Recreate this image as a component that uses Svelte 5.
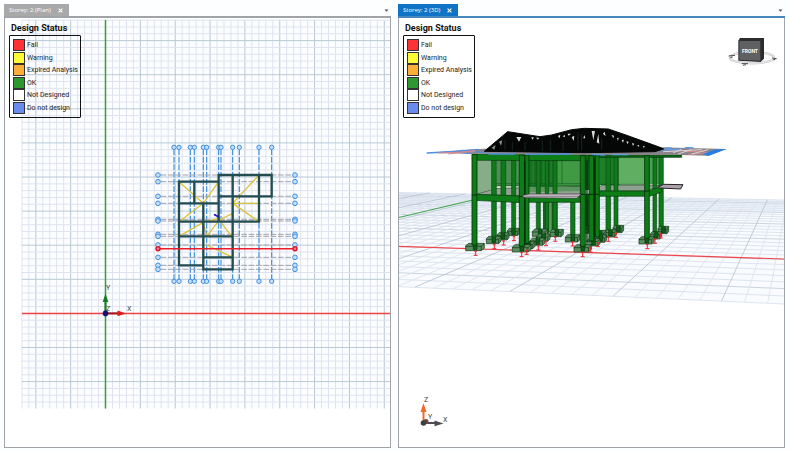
<script lang="ts">
  type Point = [number, number];

  const statuses = [
    { label: "Fail", color: "#fb3236" },
    { label: "Warning", color: "#fdfb35" },
    { label: "Expired Analysis", color: "#fbae3a" },
    { label: "OK", color: "#2f972f" },
    { label: "Not Designed", color: "#ffffff" },
    { label: "Do not design", color: "#6a8bee" },
  ];

  const panels = [
    { id: "plan", title: "Storey: 2 (Plan)" },
    { id: "model", title: "Storey: 2 (3D)" },
  ];
  let active = $state("model");

  // plan view
  const planCols = Array.from({ length: 53 }, (_, i) => ({
    x: 105.5 + (i - 12) * 6.97,
    major: (i - 12) % 5 === 0,
  }));
  const planRows = Array.from({ length: 57 }, (_, i) => ({
    y: 313.4 + (i - 43) * 6.82,
    major: (i - 43) % 5 === 0,
  }));
  const gridX = [102, 117, 151, 163, 190, 200, 236, 243, 278, 298, 357, 395];
  const gridY = [120, 140, 184, 205, 253, 258, 298, 304, 330, 367, 391, 403];

  const beams =
    "M117 140H236M117 140V391M163 140V205M117 205H236M236 120V260M236 120H395V184H236" +
    "M278 120V403M357 120V260M117 260H357M190 205V403M117 304H278M190 367H278M117 391H190M190 403H278";
  const spans =
    "M117 140L190 205L236 140M190 205L117 260M117 304L190 262L200 304M357 120L278 205L357 260" +
    "M278 205H352M200 304L238 255L275 304M200 330L278 367M238 255L278 235M190 262L236 250";

  // ground plane of the 3D view
  const vanish: Point = [1237, -172];
  const groundRows = Array.from({ length: 30 }, (_, i) => {
    const t = i / 29;
    return {
      left: 1 / (0.002033 + 0.00273 * t) - 172,
      right: 1 / (0.001838 + 0.00247 * t) - 172,
      major: i % 5 === 2,
    };
  });
  const majors = [-1640, -1470, -1290, -1100, -895, -675, -440, -190, 75, 360, 670, 995, 1340];
  const groundCols = majors.slice(0, -1).flatMap((x, i) =>
    [0, 1, 2, 3, 4].map((k) => {
      const bx = x + ((majors[i + 1] - x) * k) / 5;
      const by = 319 + (bx - 25) * 0.045;
      const slope = (vanish[0] - bx) / (vanish[1] - by);
      const ty = 38 + ((bx + (50 - by) * slope) - 25) * 0.019;
      return { x1: bx, y1: by, x2: bx + (ty - by) * slope, y2: ty, major: k === 0 };
    }),
  );

  // [x, width, top, bottom]
  const backColumns = [
    [200, 14, 136, 368], [228, 14, 136, 358], [260, 12, 136, 345],
    [334, 12, 136, 370], [361, 10, 136, 355], [384, 12, 136, 345],
    [437, 13, 250, 362], [505, 6, 124, 350],
    [543, 14, 124, 348], [567, 12, 124, 336], [684, 11, 124, 352], [702, 13, 124, 338],
  ];
  const frontColumns = [
    [141, 15, 118, 390], [283, 16, 120, 394], [300, 12, 120, 385],
    [466, 15, 122, 394], [492, 14, 122, 378], [511, 12, 122, 366], [659, 14, 122, 370],
  ];
  // [centre x, centre y, width]
  const footings = [
    [265, 351, 36], [395, 354, 40], [345, 353, 46], [495, 344, 44], [580, 342, 32], [715, 345, 32],
    [234, 364, 36], [355, 368, 40], [556, 355, 36], [693, 361, 34], [525, 357, 36],
    [206, 375, 44], [338, 380, 44], [443, 370, 44], [527, 371, 36], [505, 382, 40], [665, 376, 46],
    [310, 390, 40], [150, 396, 56], [290, 400, 56], [473, 400, 52],
  ];
  const supports = [
    [152, 406], [208, 386], [236, 375], [267, 362], [290, 410], [305, 403], [340, 390], [363, 377],
    [391, 364], [443, 378], [473, 410], [497, 396], [519, 380], [550, 364], [573, 352],
    [667, 386], [690, 370], [707, 354],
  ];
  const trussGaps =
    "M274 66H289L282 80ZM319 67H327L322 74ZM333 68H342L339 74Z" +
    "M399 63L406 59L404 70ZM413 64L420 60L420 66ZM428 56H438L431 62Z" +
    "M440 66L448 63L446 78ZM500 48H510L505 76ZM515 82L520 56L523 86ZM534 56L539 50L542 64Z" +
    "M478 60L481 70H475ZM560 60L567 62L565 70ZM576 69L581 68L579 78Z" +
    "M590 75L597 74L594 83ZM604 79L611 80L608 88ZM621 84L628 86L624 93ZM637 90L643 90L640 96Z" +
    "M654 93L660 94L656 99Z";
</script>

<main class="workspace">
  {#each panels as panel (panel.id)}
    <section class="panel" class:active={active === panel.id}>
      <header class="tab-bar">
        <div class="tab">
          <button class="tab-title" onclick={() => (active = panel.id)}>{panel.title}</button>
          <button class="tab-close" aria-label="Close {panel.title}">
            <svg viewBox="0 0 5 5"><path d="M.6 .6L4.4 4.4M4.4 .6L.6 4.4" stroke="#fff" stroke-width="1.1" /></svg>
          </button>
        </div>
        <button class="tab-menu" aria-label="View list">
          <svg viewBox="0 0 5 5"><path d="M.5 1.5H4.5L2.5 3.8Z" fill="#46525e" /></svg>
        </button>
      </header>

      <div class="view">
        {#if panel.id === "plan"}
          <svg class="scene" viewBox="5 18 385 429" role="img" aria-label="Storey plan">
            <g fill="none">
              <rect x="22" y="20" width="368" height="388.5" fill="#fcfdff" />
              {#each planCols as c}
                <line x1={c.x} x2={c.x} y1="20" y2="408.5" stroke={c.major ? "#b9c6d6" : "#dfe3f0"} stroke-width="1" />
              {/each}
              {#each planRows as r}
                <line x1="22" x2="390" y1={r.y} y2={r.y} stroke={r.major ? "#b9cad6" : "#dfe3f0"} stroke-width="1" />
              {/each}
              <path d="M105.5 20V408.5" stroke="#2ba336" stroke-width="1.5" />
              <path d="M22 313.4H390" stroke="#f04444" stroke-width="1.5" />
            </g>

            <g transform="translate(140 135) scale(.3333)" fill="none">
              {#each gridX as x}
                <line x1={x} x2={x} y1="44" y2="432" stroke="#3b8ee0" stroke-width="3.5" stroke-dasharray="17 5" />
                <circle cx={x} cy="37" r="6.5" fill="#c6e0f9" stroke="#3b8ee0" stroke-width="3" />
                <circle cx={x} cy="439" r="6.5" fill="#c6e0f9" stroke="#3b8ee0" stroke-width="3" />
              {/each}
              {#each gridY as y}
                <line x1="62" x2="457" y1={y} y2={y} stroke="#a2a2a8" stroke-width="3" stroke-dasharray="17 5" />
                <circle cx="54" cy={y} r="7" fill="#c6e0f9" stroke="#3b8ee0" stroke-width="3" />
                <circle cx="465" cy={y} r="7" fill="#c6e0f9" stroke="#3b8ee0" stroke-width="3" />
              {/each}
              <path d={spans} stroke="#dcc23a" stroke-width="4" />
              <path d={beams} stroke="#234c50" stroke-width="7" stroke-linecap="square" />
              <path d="M60 341H459" stroke="#ee1c2a" stroke-width="4.5" />
              <circle cx="54" cy="341" r="6" fill="#f08a98" stroke="#e0182a" stroke-width="4.5" />
              <circle cx="465" cy="341" r="6" fill="#f08a98" stroke="#e0182a" stroke-width="4.5" />
              <path d="M224 239L227 241M231 243L233 245" stroke="#1c16c8" stroke-width="5.5" stroke-linecap="round" />
            </g>

            <path d="M105.5 313V300" stroke="#157a22" stroke-width="2" />
            <path d="M105.5 293.5L108.3 302H102.7Z" fill="#157a22" />
            <path d="M106 313.4H119" stroke="#a81616" stroke-width="2" />
            <path d="M126 313.4L117.5 310.6V316.2Z" fill="#d81e1e" />
            <text class="axis" x="106" y="311">Z</text>
            <circle cx="105.5" cy="313.4" r="2.8" fill="#12127a" />
            <text class="axis" x="106" y="290">Y</text>
            <text class="axis" x="127" y="311">X</text>
          </svg>
        {:else}
          <svg class="scene" viewBox="399 18 385 429" role="img" aria-label="3D model">
            <g transform="translate(390 180) scale(.3333)" fill="none">
              <path d="M25 38L1184 60V373L25 320Z" fill="#f9fbfe" />
              <path d="M25 38L1184 60V95L25 85Z" fill="#f0f5fb" />
              {#each groundRows as r}
                <line x1="25" x2="1184" y1={r.left} y2={r.right} stroke={r.major ? "#bfcddb" : "#d7e0ed"} stroke-width="2.5" />
              {/each}
              {#each groundCols as c}
                <line x1={c.x1} x2={c.x2} y1={c.y1} y2={c.y2} stroke={c.major ? "#b4c3d2" : "#dbe2ed"} stroke-width="2.5" />
              {/each}
              <path d="M25 113L248 60" stroke="#3fa549" stroke-width="3.5" />
              <path d="M25 199L1184 237" stroke="#f0444a" stroke-width="3.5" />
            </g>

            <g transform="translate(425 115) scale(.3333)" stroke-linejoin="round">
              <!-- walls -->
              <path d="M155 136H201V222L155 236Z" fill="#86ac88" />
              <path d="M214 134H284V214H214Z" fill="#4c8f52" />
              <path d="M308 134H398V222H308Z" fill="#207a29" />
              <path d="M395 134H466V215H395Z" fill="#3f9a43" />
              <path d="M478 124H520V225H478Z" fill="#1c6c25" />
              <path d="M524 124H583V210H524Z" fill="#1f8029" />
              <path d="M580 124H660V208H580Z" fill="#5fae62" />
              <path d="M672 124H706V206H672Z" fill="#4ba152" />
              <path d="M354 255H398V350H354ZM478 250H520V350H478Z" fill="#19611f" />
              <path d="M372 262H380V350H372ZM508 262H514V340H508Z" fill="#5c9c61" />
              <g fill="none" stroke="#0f4d17" stroke-width="1.5">
                <path d="M214 206H466M214 212H466M318 136V212M330 136V212M411 136V206M524 208H660M580 124V208M672 205H706M350 136V212M374 136V212" />
              </g>

              <!-- floor -->
              <path d="M152 238L214 220L470 214L466 238L300 243Z" fill="#92a393" stroke="#16431b" stroke-width="2" />
              <path d="M512 228L530 210H705L668 228Z" fill="#8fa191" stroke="#16431b" stroke-width="2" />
              <path d="M310 216H466V228L310 232Z" fill="#5d9460" />

              {#each backColumns as [x, w, top, bottom]}
                <rect {x} y={top} width={w} height={bottom - top} fill="#0f7a1a" stroke="#084a10" stroke-width="2" />
              {/each}

              {#each footings as [cx, cy, w]}
                <g stroke="#0a3410" stroke-width="2">
                  <path d="M{cx - w / 2} {cy - 4}L{cx - w / 3} {cy - 11}H{cx + w / 2}V{cy + 4}L{cx + w / 3} {cy + 11}H{cx - w / 2}Z" fill="#5b8d60" />
                  <path d="M{cx - w / 2} {cy - 2}H{cx + w / 3}L{cx + w / 2} {cy - 10}M{cx + w / 3} {cy - 2}V{cy + 11}" fill="none" />
                  <path d="M{cx - 5} {cy - 11}V{cy + 8}H{cx + 6}V{cy - 11}" fill="#0c5d15" />
                </g>
              {/each}

              <!-- beams -->
              <path d="M142 117L480 119V137L142 136Z" fill="#0d7d18" stroke="#063a0c" stroke-width="2" />
              <path d="M470 119H770V127H520L480 140H470Z" fill="#0d6417" stroke="#05300a" stroke-width="2" />
              <path d="M145 238L290 243V263L145 256Z" fill="#0d7d18" stroke="#063a0c" stroke-width="2" />
              <path d="M310 245L470 243V262H310Z" fill="#0d7d18" stroke="#063a0c" stroke-width="2" />
              <path d="M480 243L520 228H670L710 214V231L675 244H525L480 262Z" fill="#0d7d18" stroke="#063a0c" stroke-width="2" />

              {#each frontColumns as [x, w, top, bottom]}
                <rect {x} y={top} width={w} height={bottom - top} fill="#0d7d18" stroke="#053109" stroke-width="2.5" />
              {/each}
              <path d="M299 138V390M486 138V380M508 128V370" stroke="#042b08" stroke-width="4" />
              <path d="M141 240H156M283 245H312M466 238H523M659 228H673" stroke="#042b08" stroke-width="3" />

              <!-- canopies -->
              <path d="M290 242L312 237L468 237L455 250L300 248Z" fill="#c8c2c8" stroke="#3a373c" stroke-width="2" />
              <path d="M300 244H460" stroke="#6d666e" stroke-width="2" />
              <path d="M698 217L716 208L774 209L767 222L702 219Z" fill="#ada2aa" stroke="#242226" stroke-width="3" />

              <!-- eaves -->
              <path d="M5 114L110 105L178 101L700 97L905 102L850 122L765 120L480 119L140 116Z" fill="#8a8489" />
              <path d="M5 114L75 110L140 116M60 112L160 103M110 106L180 113M90 109L130 108M190 117H270M300 118L440 117" stroke="#4f8fe0" stroke-width="4" fill="none" />
              <path d="M40 114L150 110M70 117L150 106M780 110L840 108M790 118L860 112" stroke="#d98a8e" stroke-width="3" fill="none" />
              <path d="M905 102L868 104L833 118L850 123Z" fill="#257ee8" />
              <path d="M720 99H740M780 98H805M500 118L540 120M560 119H610M700 106L770 102" stroke="#5e9be8" stroke-width="4" />
              <path d="M715 110L830 104M760 117L800 103M800 117L850 104M745 113L770 103" stroke="#ddd3d3" stroke-width="3" />

              <!-- roof trusses -->
              <path d="M178 109L248 50L345 65L380 60L440 44L478 40L550 42L600 59L705 97L716 102L690 110L480 113Z" fill="#050706" stroke="#050706" stroke-width="3" />
              <path d={trussGaps} fill="#d9dfda" />
              <path d="M200 98L212 90L208 104ZM222 80L232 76L228 92Z" fill="#8a938c" />
              <path d="M240 74V104M262 82V106M300 80V106M352 76V108M376 74V108M414 78V108M459 52V106M470 56V106M530 70V104" stroke="#20362a" stroke-width="2" />

              {#each supports as [x, y]}
                <path d="M{x} {y}V{y + 15}M{x - 6} {y + 15}H{x + 6}M{x - 4} {y + 3}H{x + 4}" stroke="#ee2630" stroke-width="3" fill="none" />
              {/each}
            </g>

            <!-- view cube -->
            <g transform="translate(690 0) scale(.3333)">
              <ellipse cx="186" cy="173" rx="66" ry="17" fill="none" stroke="#c9c9c9" stroke-width="7" />
              <ellipse cx="186" cy="173" rx="66" ry="17" fill="none" stroke="#ececec" stroke-width="3" />
              <path d="M145 122L150 114H222V176L212 186L145 182Z" fill="#2c2c2e" />
              <path d="M148 123H211V182L148 179Z" fill="#5e6062" />
              <path d="M116 168L135 166M121 173L128 171M155 191H174M159 196L168 194M246 174L260 176M250 179L256 179" stroke="#4a4a4a" stroke-width="3" />
            </g>
            <text class="cube-label" x="750" y="53">FRONT</text>

            <path d="M423.5 423V411" stroke="#f06a2a" stroke-width="2" />
            <path d="M423.5 403L426.5 412H420.5Z" fill="#f4682a" />
            <path d="M424 423H436" stroke="#4c4c50" stroke-width="2" />
            <path d="M443.5 423.4L434.5 420.4V426.2Z" fill="#4c4c50" />
            <circle cx="426" cy="421.5" r="2.5" fill="#6b4b40" />
            <circle cx="423.5" cy="423" r="2.8" fill="#3c3f44" />
            <text class="axis" x="424" y="402">Z</text>
            <text class="axis" x="428" y="419">Y</text>
            <text class="axis" x="443" y="422">X</text>
          </svg>
        {/if}

        <aside class="legend">
          <h2>Design Status</h2>
          <ul>
            {#each statuses as status}
              <li>
                <span class="swatch" style="background: {status.color}"></span>
                {status.label}
              </li>
            {/each}
          </ul>
        </aside>
      </div>
    </section>
  {/each}
</main>

<style>
  :global(body) {
    margin: 0;
    background: #fdfeff;
  }

  .workspace {
    --tab: #a9a9a9;
    --rule: #a0a4a8;
    display: flex;
    gap: 7px;
    box-sizing: border-box;
    height: 100vh;
    padding: 4px 5px 4px 4px;
    font-family: Roboto, "Liberation Sans", sans-serif;
  }

  .panel {
    display: flex;
    flex: 1;
    flex-direction: column;
    min-width: 0;
  }

  .panel.active {
    --tab: #0f74c6;
    --rule: #4787bd;
  }

  .tab-bar {
    display: flex;
    align-items: stretch;
    justify-content: space-between;
    height: 12px;
    border-bottom: 2px solid var(--rule);
  }

  .tab {
    display: flex;
    align-items: center;
    gap: 7px;
    padding: 0 6px 0 5px;
    background: var(--tab);
  }

  button {
    padding: 0;
    border: none;
    background: none;
    font: inherit;
    cursor: pointer;
  }

  .tab-title {
    color: #fff;
    font-family: "Open Sans", sans-serif;
    font-size: 6px;
    line-height: 12px;
    white-space: nowrap;
  }

  .tab-close,
  .tab-menu {
    display: flex;
    align-items: center;
  }

  .tab-close svg,
  .tab-menu svg {
    width: 5px;
    height: 5px;
  }

  .tab-menu {
    padding: 0 2px;
  }

  .view {
    position: relative;
    flex: 1;
    min-height: 0;
    border: 1px solid #a0a4a8;
    border-top: none;
    background: #fff;
    overflow: hidden;
  }

  .scene {
    display: block;
    width: 100%;
    height: 100%;
  }

  .axis {
    fill: #444;
    font-size: 7px;
  }

  .cube-label {
    fill: #fff;
    font-size: 5px;
    font-weight: 700;
    text-anchor: middle;
  }

  .legend {
    position: absolute;
    top: 4px;
    left: 4px;
  }

  .legend h2 {
    margin: 0 0 1px 2px;
    color: #111;
    font-size: 9px;
    line-height: 12px;
  }

  .legend ul {
    display: flex;
    flex-direction: column;
    justify-content: space-between;
    box-sizing: border-box;
    width: 72px;
    height: 83px;
    margin: 0;
    padding: 3px;
    border: 1px solid #111;
    border-radius: 1px;
    list-style: none;
  }

  .legend li {
    display: flex;
    align-items: center;
    gap: 2px;
    color: #222;
    font-size: 7px;
    line-height: 12px;
    white-space: nowrap;
  }

  .swatch {
    flex: none;
    box-sizing: border-box;
    width: 12px;
    height: 12px;
    border: 1px solid #333;
  }
</style>
